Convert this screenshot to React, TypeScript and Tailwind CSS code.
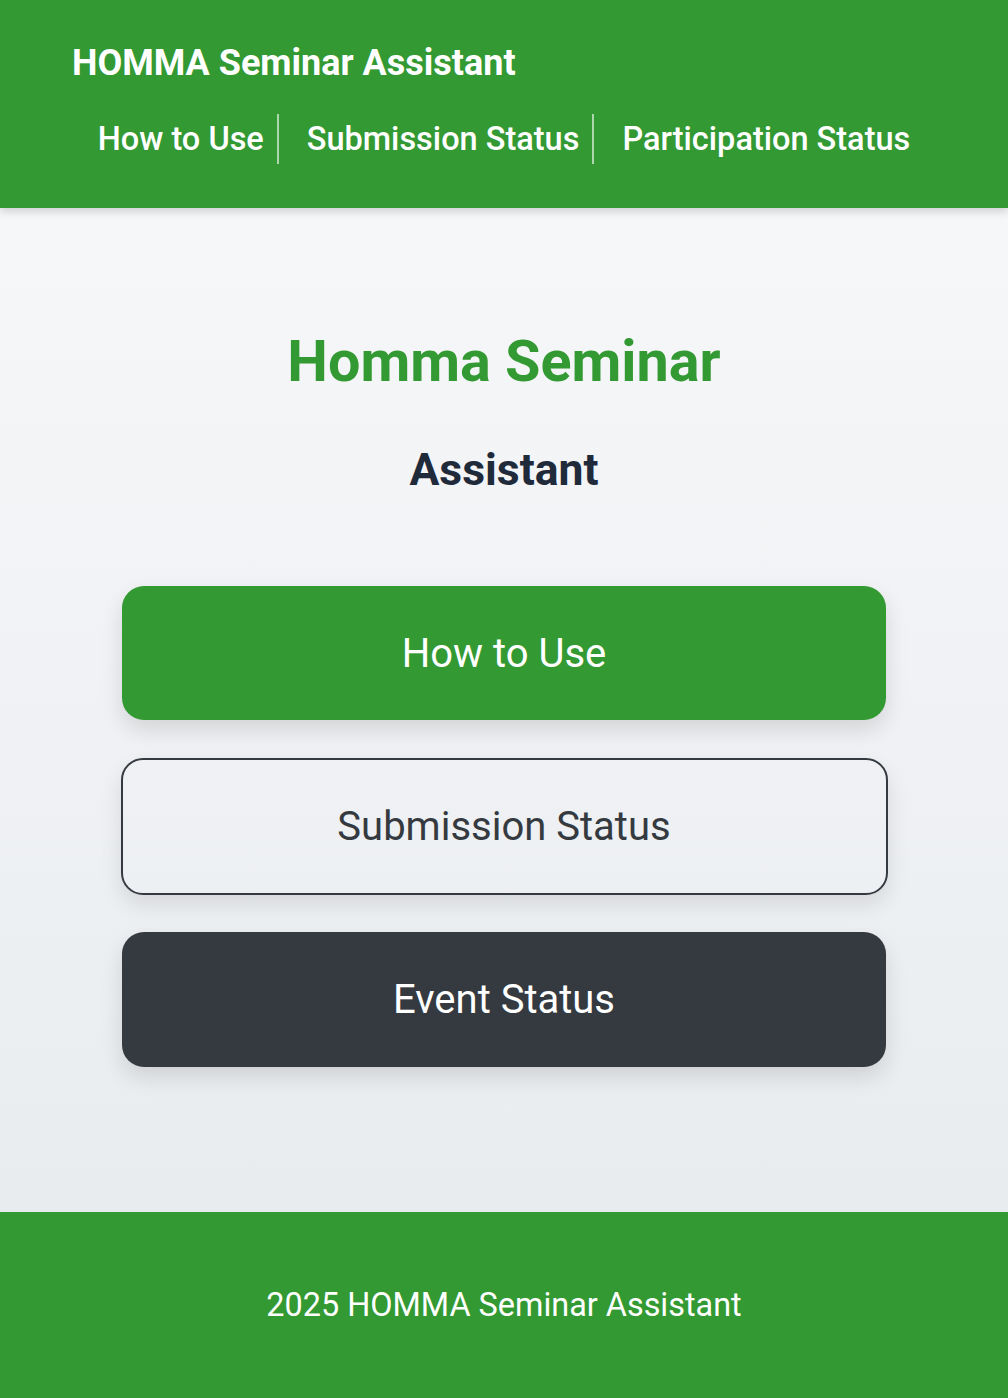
import { useState } from "react";

const navItems = ["How to Use", "Submission Status", "Participation Status"];

export default function App() {
  const [active, setActive] = useState<string>("home");

  return (
    <div className="min-h-screen flex flex-col font-['Roboto','Liberation_Sans',sans-serif]">
      <header className="relative z-10 bg-[#339933] text-white shadow-[0_4px_8px_rgba(0,0,0,0.15)]">
        <div className="pt-[41px] pb-[44px]">
          <h1 className="pl-[72px] text-[36px] leading-[44px] font-bold">HOMMA Seminar Assistant</h1>
          <nav className="mt-[29px] flex items-center justify-center">
            {navItems.map((item, i) => (
              <div key={item} className="flex items-center">
                {i > 0 && <span className="ml-[13px] mr-[28px] h-[50px] w-[2px] bg-white/60" />}
                <button
                  onClick={() => setActive(item)}
                  className="text-[32.5px] leading-[40px] font-medium text-white"
                >
                  {item}
                </button>
              </div>
            ))}
          </nav>
        </div>
      </header>

      <main className="flex-1 bg-gradient-to-b from-[#f6f7f9] to-[#e9ecef] pt-[119px] pb-[145px]">
        <div className="text-center">
          <h2 className="text-[57.5px] leading-[70px] font-bold text-[#339933]">Homma Seminar</h2>
          <h3 className="mt-[47px] text-[44.5px] leading-[53px] font-bold text-[#1f2a3a]">Assistant</h3>
        </div>

        <div className="mt-[89px] flex flex-col items-center">
          <button
            onClick={() => setActive("howto")}
            className="w-[764px] h-[134px] rounded-[22px] bg-[#339933] text-white text-[40px] leading-[48px] pt-[2px] shadow-[0_10px_22px_rgba(0,0,0,0.12)]"
          >
            How to Use
          </button>
          <button
            onClick={() => setActive("submission")}
            className="mt-[38px] w-[767px] h-[137px] rounded-[22px] border-2 border-[#343a40] bg-transparent text-[#343a40] text-[40px] leading-[48px] shadow-[0_10px_22px_rgba(0,0,0,0.10)]"
          >
            Submission Status
          </button>
          <button
            onClick={() => setActive("event")}
            className="mt-[37px] w-[764px] h-[135px] rounded-[22px] bg-[#343a40] text-white text-[40px] leading-[48px] shadow-[0_10px_22px_rgba(0,0,0,0.12)]"
          >
            Event Status
          </button>
        </div>
        <span className="hidden">{active}</span>
      </main>

      <footer className="bg-[#339933] text-white h-[186px] flex items-center justify-center">
        <p className="text-[32.4px] leading-[40px]">2025 HOMMA Seminar Assistant</p>
      </footer>
    </div>
  );
}
